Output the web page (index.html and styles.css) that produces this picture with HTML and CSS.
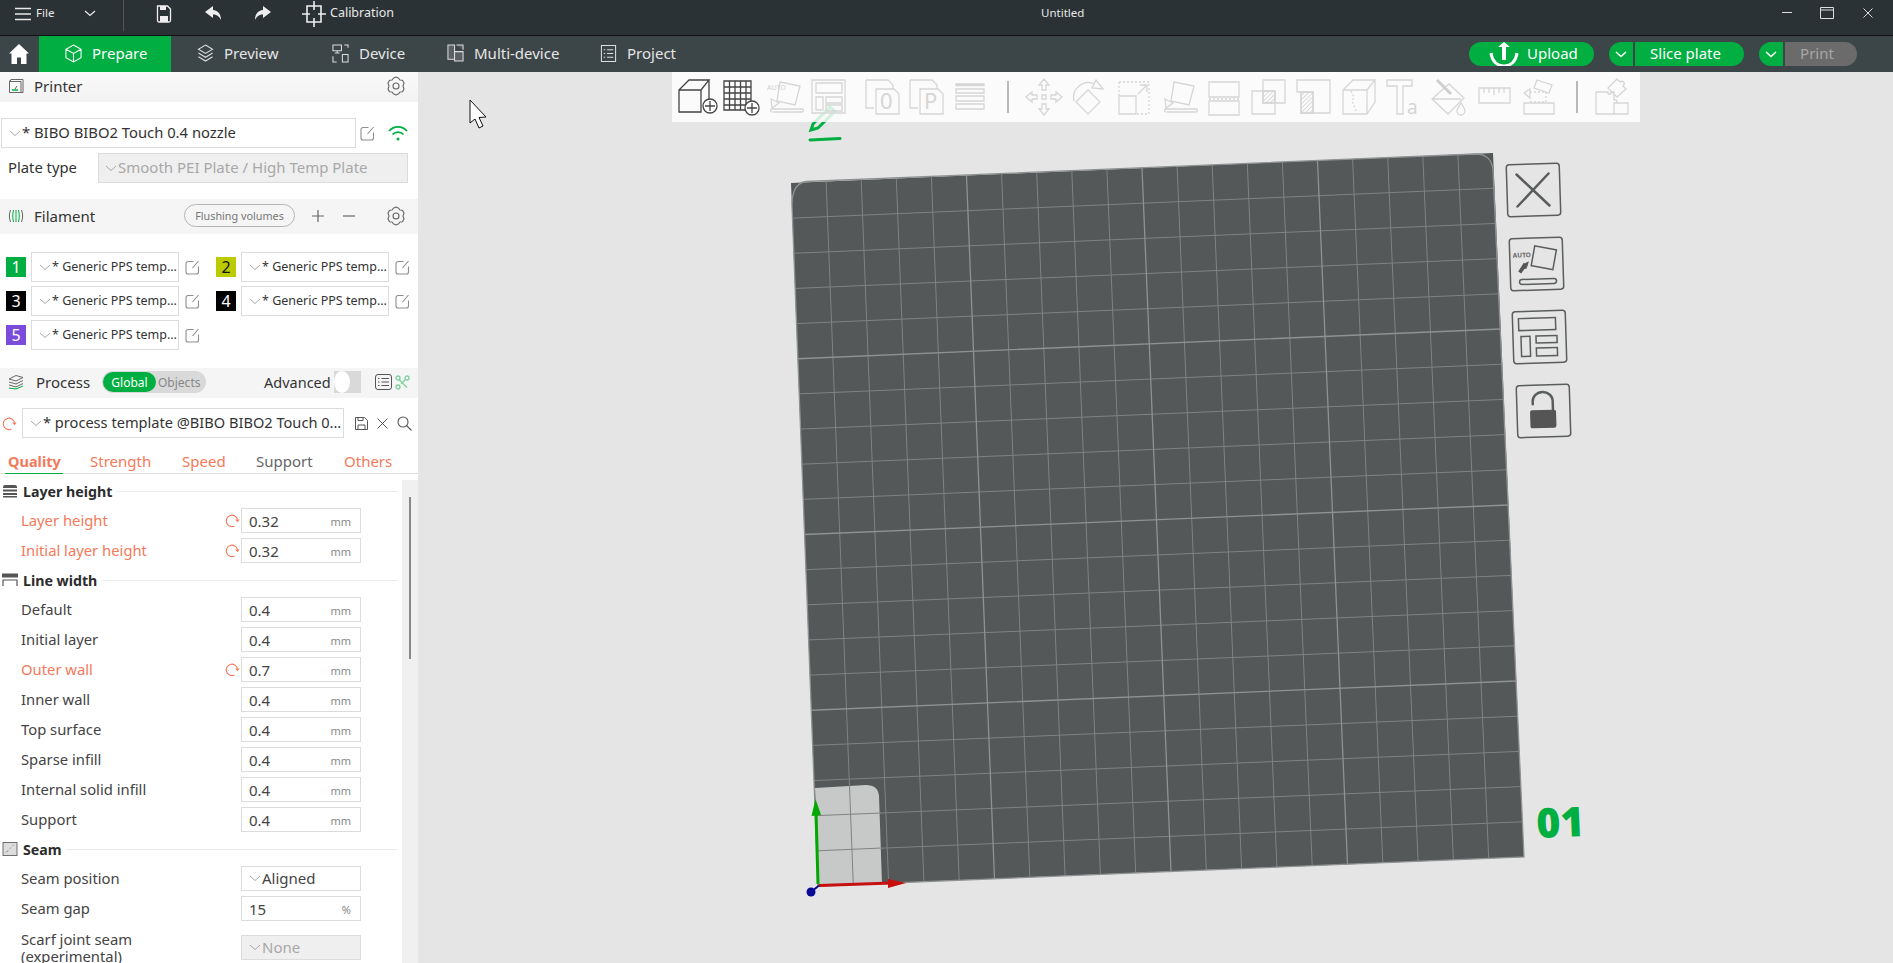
FILE: index.html
```html
<!DOCTYPE html>
<html lang="en">
<head>
<meta charset="utf-8">
<title>Untitled</title>
<link rel="stylesheet" href="styles.css">
</head>
<body>
<svg class="defs" aria-hidden="true">
  <symbol id="chev" viewBox="0 0 12 7"><path d="M1 1l5 4.5L11 1" fill="none" stroke="#a8a8a8" stroke-width="1"/></symbol>
  <symbol id="edit" viewBox="0 0 15 15"><path d="M8.5 1.5H3a2 2 0 0 0-2 2V12a2 2 0 0 0 2 2h8.500a2 2 0 0 0 2-2V6.500M7.500 8L13.500 1" fill="none" stroke="#8e8e8e" stroke-width="1.100"/></symbol>
  <symbol id="gear" viewBox="0 0 18 20"><path d="M6.300 2.200L9 1l2.700 1.200 1.200 1.800 2.600.2L17 7l-1 3 1 3-1.500 2.800-2.600.2-1.200 1.800L9 19l-2.700-1.200L5.100 16l-2.600-.2L1 13l1-3-1-3 1.500-2.800 2.600-.2z" fill="none" stroke="#666" stroke-width="1.100" stroke-linejoin="round"/><circle cx="9" cy="10" r="3" fill="none" stroke="#666" stroke-width="1.100"/></symbol>
  <symbol id="reload" viewBox="0 0 15 15"><path d="M9.500 13A5.700 5.700 0 1 1 12.500 6.500" fill="none" stroke="#f4795a" stroke-width="1.100"/><path d="M10.300 6.600h4.400l-2.200 2.600z" fill="#f4795a"/></symbol>
</svg>

<header class="titlebar">
  <div class="title-left">
    <svg class="ic-menu" viewBox="0 0 16 14"><path d="M0 1.500h16M0 7h16M0 12.500h16" stroke="#e8e8e8" stroke-width="1.400"/></svg>
    <span class="file-label">File</span>
    <svg class="ic-filechev" viewBox="0 0 12 7"><path d="M1 1l5 4.500L11 1" fill="none" stroke="#e8e8e8" stroke-width="1.300"/></svg>
    <span class="title-sep"></span>
    <svg class="ic-save" viewBox="0 0 16 18"><path d="M1.500 1h10l3 3v11.500a1.500 1.500 0 0 1-1.500 1.500H3a1.500 1.500 0 0 1-1.500-1.500z" fill="none" stroke="#eee" stroke-width="1.300"/><path d="M4 11h8v6H4zM4 1h6v4H4z" fill="#eee"/></svg>
    <svg class="ic-undo" viewBox="0 0 17 15"><path d="M8 0L0 6l8 6V8.500c3.500 0 6 1.500 8 5.500 0-6-3-9.500-8-10z" fill="#eee"/></svg>
    <svg class="ic-redo" viewBox="0 0 17 15"><path d="M9 0l8 6-8 6V8.500c-3.500 0-6 1.500-8 5.500 0-6 3-9.500 8-10z" fill="#eee"/></svg>
    <svg class="ic-calib" viewBox="0 0 24 26"><path d="M5 5h14v16H5z" fill="none" stroke="#eee" stroke-width="1.600"/><path d="M12 0v9M12 17v9M0 13h8M16 13h8" stroke="#eee" stroke-width="1.600"/></svg>
    <span class="calib-label">Calibration</span>
  </div>
  <span class="doc-title">Untitled</span>
  <div class="win-controls">
    <svg class="ic-min" viewBox="0 0 10 1"><path d="M0 .5h10" stroke="#ddd"/></svg>
    <svg class="ic-max" viewBox="0 0 14 12"><path d="M.5.500h13v11H.5zM.5 3h13" fill="none" stroke="#ddd"/></svg>
    <svg class="ic-close" viewBox="0 0 10 10"><path d="M.5.500l9 9M9.500.500l-9 9" stroke="#ddd"/></svg>
  </div>
</header>

<nav class="navbar">
  <svg class="ic-home" viewBox="0 0 20 20"><path d="M10 0l10 9.500h-2.500V20H12v-6.500H8V20H2.500V9.500H0z" fill="#fff"/></svg>
  <div class="tab tab-prepare tab-active">
    <svg class="tab-ic" viewBox="0 0 18 20"><path d="M9 1l8 4.500v9L9 19l-8-4.500v-9zM1 5.500l8 4.500 8-4.500M9 10v9" fill="none" stroke="#fff" stroke-width="1.100"/></svg>
    <span>Prepare</span>
  </div>
  <div class="tab tab-preview">
    <svg class="tab-ic" viewBox="0 0 18 20"><path d="M9 1l7.500 4.500L9 10 1.500 5.500zM1.500 9.500L9 14l7.500-4.500M1.500 13.500L9 18l7.500-4.500" fill="none" stroke="#ddd" stroke-width="1.100"/></svg>
    <span>Preview</span>
  </div>
  <div class="tab tab-device">
    <svg class="tab-ic" viewBox="0 0 18 20"><path d="M1 1h9v6H1zM5.500 7v2M3 9.500h5M13 1h4v3M1 13v6h4M11 11h6v8h-6z" fill="none" stroke="#ddd" stroke-width="1.100"/></svg>
    <span>Device</span>
  </div>
  <div class="tab tab-multi">
    <svg class="tab-ic" viewBox="0 0 18 20"><path d="M1 1h7v15H1zM10 1h7v5M8 8h9v10H8z" fill="#586063" stroke="#ddd" stroke-width="1.100"/></svg>
    <span>Multi-device</span>
  </div>
  <div class="tab tab-project">
    <svg class="tab-ic" viewBox="0 0 18 20"><path d="M1.500 1.500h15v17h-15zM4 6h1.500M4 10h1.500M4 14h1.500M7.500 6H14M7.500 10H14M7.500 14H14" fill="none" stroke="#ddd" stroke-width="1.100"/></svg>
    <span>Project</span>
  </div>
  <div class="actions">
    <button class="btn-upload">
      <svg class="ic-upload" viewBox="0 0 30 24"><path d="M2 11c1 8 6 13 13 13s12-5 13-13" fill="none" stroke="#fff" stroke-width="3"/><path d="M15 0l6 5h-4v13h-4V5H9z" fill="#fff"/></svg>
      <span class="btn-text">Upload</span>
    </button>
    <div class="split">
      <span class="split-chev"><svg class="ic-btnchev" viewBox="0 0 12 7"><path d="M1 1l5 4.500L11 1" fill="none" stroke="#fff" stroke-width="1.500"/></svg></span>
      <span class="split-main split-slice">Slice plate</span>
    </div>
    <div class="split">
      <span class="split-chev"><svg class="ic-btnchev" viewBox="0 0 12 7"><path d="M1 1l5 4.500L11 1" fill="none" stroke="#fff" stroke-width="1.500"/></svg></span>
      <span class="split-main split-print">Print</span>
    </div>
  </div>
</nav>

<main class="main">
  <aside class="sidebar">
    <div class="strip strip-printer">
      <svg class="strip-ic" viewBox="0 0 16 16"><path d="M3 1.500h12v13H1.500v-11zM1.500 3.500H13v11M3 1.500L1.500 3.500" fill="none" stroke="#666" stroke-width="1"/><path d="M4 12h6" stroke="#00ae42" stroke-width="1.500"/><path d="M7 11l2-3" stroke="#666"/></svg>
      <span class="strip-title">Printer</span>
      <svg class="gear"><use href="#gear"/></svg>
    </div>
    <div class="printer-row">
      <div class="combo combo-printer"><svg class="chev"><use href="#chev"/></svg><span>* BIBO BIBO2 Touch 0.4 nozzle</span></div>
      <svg class="edit edit-printer"><use href="#edit"/></svg>
      <svg class="ic-wifi" viewBox="0 0 20 16"><path d="M1 6c5-5.500 13-5.500 18 0M4.500 9.500c3-3.200 8-3.200 11 0" fill="none" stroke="#00ae42" stroke-width="1.800"/><circle cx="10" cy="14" r="1.500" fill="#00ae42"/></svg>
    </div>
    <div class="plate-row">
      <span class="plate-label">Plate type</span>
      <div class="combo combo-plate is-disabled"><svg class="chev"><use href="#chev"/></svg><span>Smooth PEI Plate / High Temp Plate</span></div>
    </div>

    <div class="strip strip-filament">
      <svg class="strip-ic" viewBox="0 0 16 16"><path d="M2.500 2c-1.500 4-1.500 8 0 12M13.500 2c1.500 4 1.500 8 0 12" fill="none" stroke="#666"/><path d="M5.500 2c-1 4-1 8 0 12M8 2v12M10.500 2c1 4 1 8 0 12" fill="none" stroke="#00ae42"/></svg>
      <span class="strip-title">Filament</span>
      <span class="pill">Flushing volumes</span>
      <svg class="ic-plus" viewBox="0 0 12 12"><path d="M6 0v12M0 6h12" stroke="#666" stroke-width="1.200"/></svg>
      <svg class="ic-minus" viewBox="0 0 12 12"><path d="M0 6h12" stroke="#666" stroke-width="1.200"/></svg>
      <svg class="gear gear-fil"><use href="#gear"/></svg>
    </div>
    <div class="filaments">
      <div class="fil"><span class="swatch sw-green">1</span><div class="combo combo-fil"><svg class="chev"><use href="#chev"/></svg><span>* Generic PPS temp...</span></div><svg class="edit"><use href="#edit"/></svg></div>
      <div class="fil"><span class="swatch sw-lime">2</span><div class="combo combo-fil"><svg class="chev"><use href="#chev"/></svg><span>* Generic PPS temp...</span></div><svg class="edit"><use href="#edit"/></svg></div>
      <div class="fil"><span class="swatch sw-black">3</span><div class="combo combo-fil"><svg class="chev"><use href="#chev"/></svg><span>* Generic PPS temp...</span></div><svg class="edit"><use href="#edit"/></svg></div>
      <div class="fil"><span class="swatch sw-black">4</span><div class="combo combo-fil"><svg class="chev"><use href="#chev"/></svg><span>* Generic PPS temp...</span></div><svg class="edit"><use href="#edit"/></svg></div>
      <div class="fil"><span class="swatch sw-purple">5</span><div class="combo combo-fil"><svg class="chev"><use href="#chev"/></svg><span>* Generic PPS temp...</span></div><svg class="edit"><use href="#edit"/></svg></div>
    </div>

    <div class="strip strip-process">
      <svg class="strip-ic" viewBox="0 0 16 16"><path d="M1 5l7-3.500 7 2-7 3.500zM15 6.500L8 10 1 8M15 9.500L8 13 1 11" fill="none" stroke="#666" stroke-width="1"/><path d="M1 14l7 1 7-3" fill="none" stroke="#00ae42"/></svg>
      <span class="strip-title">Process</span>
      <div class="seg"><span class="seg-on">Global</span><span class="seg-off">Objects</span></div>
      <span class="adv-label">Advanced</span>
      <span class="adv-toggle"><span class="adv-knob"></span></span>
      <svg class="ic-list" viewBox="0 0 17 16"><rect x=".5" y=".5" width="16" height="15" rx="2.500" fill="none" stroke="#555"/><path d="M3 4.500h1.500M3 8h1.500M3 11.500h1.500M6.500 4.500H14M6.500 8H14M6.500 11.500H14" stroke="#555"/></svg>
      <svg class="ic-scissor" viewBox="0 0 15 15"><circle cx="3" cy="3" r="2" fill="none" stroke="#7fcfa0" stroke-width="1.300"/><circle cx="12" cy="3" r="2" fill="none" stroke="#7fcfa0" stroke-width="1.300"/><circle cx="3" cy="12" r="2" fill="none" stroke="#7fcfa0" stroke-width="1.300"/><path d="M4 4.500l8 8M6 9l4-4" stroke="#7fcfa0" stroke-width="1.300"/></svg>
    </div>
    <div class="process-row">
      <svg class="reload reload-proc"><use href="#reload"/></svg>
      <div class="combo combo-process"><svg class="chev"><use href="#chev"/></svg><span>* process template @BIBO BIBO2 Touch 0...</span></div>
      <svg class="ic-disk" viewBox="0 0 13 13"><path d="M.5.500h9l3 3v9H.5zM3 .5v3h5v-3M3 12.500V8h7v4.500" fill="none" stroke="#555"/></svg>
      <svg class="ic-x" viewBox="0 0 11 11"><path d="M.5.500l10 10M10.500.500l-10 10" stroke="#555"/></svg>
      <svg class="ic-search" viewBox="0 0 15 15"><circle cx="6" cy="6" r="5" fill="none" stroke="#555" stroke-width="1.100"/><path d="M9.500 9.500l5 5" stroke="#555" stroke-width="1.100"/></svg>
    </div>
    <div class="tabs">
      <span class="ptab ptab-quality">Quality</span>
      <span class="ptab ptab-strength">Strength</span>
      <span class="ptab ptab-speed">Speed</span>
      <span class="ptab ptab-support">Support</span>
      <span class="ptab ptab-others">Others</span>
    </div>

    <div class="settings">
      <div class="settings-body">
        <div class="sec">
          <svg class="sec-ic" viewBox="0 0 16 14"><path d="M3 1h10a2 2 0 0 1 2 2v1H1V3a2 2 0 0 1 2-2zM1 5.500h14v2H1zM1 9h14v2H1zM1 12h14v1.500H1z" fill="#555"/></svg>
          <span class="sec-title">Layer height</span><span class="sec-line"></span>
        </div>
        <div class="field mod"><span class="f-label">Layer height</span><svg class="reload"><use href="#reload"/></svg><div class="input"><span>0.32</span><span class="unit">mm</span></div></div>
        <div class="field mod"><span class="f-label">Initial layer height</span><svg class="reload"><use href="#reload"/></svg><div class="input"><span>0.32</span><span class="unit">mm</span></div></div>
        <div class="sec">
          <svg class="sec-ic" viewBox="0 0 16 14"><path d="M.5 1h15v3H.5zM.5 7h15M1 7v6M15 7v6" fill="none" stroke="#555" stroke-width="1.200"/><path d="M0 1h16v3H0z" fill="#555"/></svg>
          <span class="sec-title">Line width</span><span class="sec-line"></span>
        </div>
        <div class="field"><span class="f-label">Default</span><div class="input"><span>0.4</span><span class="unit">mm</span></div></div>
        <div class="field"><span class="f-label">Initial layer</span><div class="input"><span>0.4</span><span class="unit">mm</span></div></div>
        <div class="field mod"><span class="f-label">Outer wall</span><svg class="reload"><use href="#reload"/></svg><div class="input"><span>0.7</span><span class="unit">mm</span></div></div>
        <div class="field"><span class="f-label">Inner wall</span><div class="input"><span>0.4</span><span class="unit">mm</span></div></div>
        <div class="field"><span class="f-label">Top surface</span><div class="input"><span>0.4</span><span class="unit">mm</span></div></div>
        <div class="field"><span class="f-label">Sparse infill</span><div class="input"><span>0.4</span><span class="unit">mm</span></div></div>
        <div class="field"><span class="f-label">Internal solid infill</span><div class="input"><span>0.4</span><span class="unit">mm</span></div></div>
        <div class="field"><span class="f-label">Support</span><div class="input"><span>0.4</span><span class="unit">mm</span></div></div>
        <div class="sec">
          <svg class="sec-ic" viewBox="0 0 16 15"><rect x=".5" y=".5" width="15" height="14" fill="#ddd" stroke="#666"/><path d="M4 11l2-2M8 7l1-1M11 4l1-1" stroke="#666"/></svg>
          <span class="sec-title">Seam</span><span class="sec-line"></span>
        </div>
        <div class="field"><span class="f-label">Seam position</span><div class="input input-select"><svg class="chev"><use href="#chev"/></svg><span>Aligned</span></div></div>
        <div class="field"><span class="f-label">Seam gap</span><div class="input"><span>15</span><span class="unit">%</span></div></div>
        <div class="field field-tall"><span class="f-label">Scarf joint seam<br>(experimental)</span><div class="input input-select is-disabled"><svg class="chev"><use href="#chev"/></svg><span>None</span></div></div>
      </div>
      <div class="scroll-track"><span class="scroll-thumb"></span></div>
    </div>
  </aside>

  <section class="canvas">
    <svg class="scene" viewBox="418 72 1475 891">
      <polygon points="791,183 1493,153 1524,857 818,886" fill="#545858"/>
      <g class="grid">
        <path d="M826.1 181.500L853.300 884.550M861.200 180L888.600 883.100M896.300 178.500L923.900 881.650M931.400 177L959.200 880.200M1001.600 174L1029.800 877.300M1036.700 172.500L1065.100 875.850M1071.800 171L1100.400 874.400M1106.900 169.500L1135.700 872.950M1177.100 166.500L1206.300 870.050M1212.200 165L1241.600 868.600M1247.300 163.500L1276.900 867.150M1282.400 162L1312.200 865.700M1352.600 159L1382.800 862.800M1387.700 157.500L1418.100 861.350M1422.800 156L1453.400 859.900M1457.900 154.500L1488.700 858.450"/>
        <path d="M792.350 218.150L1494.550 188.200M793.700 253.300L1496.100 223.400M795.050 288.450L1497.650 258.600M796.400 323.600L1499.200 293.800M799.100 393.900L1502.300 364.200M800.450 429.050L1503.850 399.400M801.800 464.200L1505.400 434.600M803.150 499.350L1506.950 469.800M805.850 569.650L1510.050 540.200M807.200 604.800L1511.600 575.400M808.550 639.950L1513.150 610.600M809.900 675.100L1514.700 645.800M812.600 745.400L1517.800 716.200M813.950 780.550L1519.350 751.400M815.300 815.700L1520.900 786.600M816.650 850.850L1522.450 821.800"/>
      </g>
      <path class="patch" d="M815 788L866 785Q878 785 879 796L882 884L819 886Z"/>
      <g class="grid">
        <path d="M849.500 786L853.300 884.550M815.300 815.700L881 813M816.650 850.850L882 848"/>
      </g>
      <g class="grid-major">
        <path d="M966.500 175.500L994.500 878.750M1142 168L1171 871.500M1317.500 160.500L1347.500 864.250"/>
        <path d="M797.750 358.750L1500.750 329M804.500 534.500L1508.500 505M811.250 710.250L1516.250 681"/>
      </g>
      <path class="bed-edge" d="M806 181.500C796 183 792 192 792 205L818 886L1524 857L1493 170C1492 160 1486 154 1476 154Z"/>
      <path class="axis-g" d="M818 884L816 812"/>
      <polygon class="fill-g" points="811.500,816 821,815 815.500,799"/>
      <path class="axis-r" d="M819 885.500L892 883"/>
      <polygon class="fill-r" points="888,879 888,888 906,883"/>
      <path class="axis-b" d="M819 885.500L811 892"/>
      <circle class="fill-b" cx="811" cy="892" r="4.500"/>

      <g class="pen">
        <path d="M811 130l2-6 17-17 5 4-17 17z"/>
        <path d="M810 140l30-1.500"/>
      </g>

      <g class="cursor">
        <path d="M470 100v23l5-4 4 9 4-2-4-8.500 7-.5z"/>
      </g>

      <text class="plate-num" transform="translate(1537 838) rotate(-2.500)">01</text>

      <g class="sidebtn" transform="translate(1533 190) rotate(-1.800)">
        <rect x="-26" y="-26" width="53" height="52" rx="3"/>
        <path class="thick" d="M-16-16L16 16M16-16L-16 16"/>
      </g>
      <g class="sidebtn" transform="translate(1536 264) rotate(-1.800)">
        <rect x="-26" y="-26" width="53" height="52" rx="3"/>
        <rect x="-3" y="-16" width="22" height="20" transform="rotate(12 8-6)"/>
        <text class="auto-txt" x="-23" y="-7">AUTO</text>
        <path class="solid" d="M-18 7l6-9 3 6-3 1-3 4zM-13 0l6-3-2 6z"/>
        <rect x="-17" y="15" width="37" height="5" rx="2.500"/>
      </g>
      <g class="sidebtn" transform="translate(1539 337) rotate(-1.800)">
        <rect x="-26" y="-26" width="53" height="52" rx="3"/>
        <rect x="-20" y="-19" width="37" height="12"/>
        <rect x="-18" y="-1" width="9" height="20"/>
        <rect x="-3" y="-1" width="21" height="7"/>
        <rect x="-3" y="11" width="21" height="8"/>
      </g>
      <g class="sidebtn" transform="translate(1543 411) rotate(-1.800)">
        <rect x="-26" y="-26" width="53" height="52" rx="3"/>
        <path d="M-10-7v-3a10 9 0 0 1 20 0v9" class="thick"/>
        <rect class="solid" x="-13" y="-1" width="26" height="18" rx="2"/>
      </g>
    </svg>

    <div class="toolbar">
      <svg class="tool tool-on" viewBox="0 0 36 36"><path d="M0 11h22v22H0zM0 11L10 1h20L22 11M30 1v19"/><circle cx="31" cy="27" r="7" fill="#fff"/><path d="M31 22v10M26 27h10"/></svg>
      <svg class="tool tool-on" viewBox="0 0 36 36"><path d="M1 2h27v29H1zM6.500 2v29M12 2v29M17.500 2v29M23 2v29M1 8h27M1 14h27M1 20h27M1 26h27"/><circle cx="29" cy="29" r="7" fill="#fff"/><path d="M29 24v10M24 29h10"/></svg>
      <svg class="tool" viewBox="0 0 36 36"><path d="M13 3l20 4-5 19-18-4zM6 33h29M5 33a1.500 1.500 0 0 1 0-3h30a1.500 1.500 0 0 1 0 3M4 20l1 9 7-5z"/><text class="tool-txt" x="0" y="11">AUTO</text></svg>
      <svg class="tool" viewBox="0 0 36 36"><path d="M1 1h33v33H1zM5 4h26v10H5zM5 18h7v13H5zM15 18h16v6H15zM15 26h16v6H15z"/></svg>
      <svg class="tool tool-gap" viewBox="0 0 36 36"><path d="M2 1h22l5 5v4M2 1v28h8M12 10h18l5 5v20H12z"/><text class="tool-big" x="16" y="30">0</text></svg>
      <svg class="tool" viewBox="0 0 36 36"><path d="M2 1h22l5 5v4M2 1v28h8M12 10h18l5 5v20H12z"/><text class="tool-big" x="16" y="30">P</text></svg>
      <svg class="tool" viewBox="0 0 36 36"><path d="M4 5h28v1.500H4zM4 10h28v4H4zM4 17h28v5H4zM4 25h28v5H4z"/></svg>
      <span class="tool-sep tool-sep-a"></span>
      <div class="tool-group">
        <svg class="tool" viewBox="0 0 36 36"><path d="M18 0l5 6h-3v5h-4V6h-3zM18 36l5-6h-3v-5h-4v5h-3zM0 18l6-5v3h5v4H6v3zM36 18l-6-5v3h-5v4h5v3zM16 16h4v4h-4z"/></svg>
        <svg class="tool" viewBox="0 0 36 36"><path d="M17 11l12 12-12 12L5 23zM3 22A15 15 0 0 1 24 5M25 1l7 9-11-1z"/></svg>
        <svg class="tool" viewBox="0 0 36 36"><path class="dash" d="M3 3h30v32h-12"/><path class="dash" d="M3 3v14"/><path d="M3 17h17v18H3zM22 15l8-8M24 6h7v7"/></svg>
        <svg class="tool" viewBox="0 0 36 36"><path d="M13 3l20 4-5 19-18-4zM6 33h29M5 33a1.500 1.500 0 0 1 0-3h30a1.500 1.500 0 0 1 0 3M4 20l1 9 7-5z"/></svg>
        <svg class="tool" viewBox="0 0 36 36"><path d="M3 3h30v15H3zM3 22h30v14H3z"/><path class="dash" d="M3 20h30"/></svg>
        <svg class="tool" viewBox="0 0 36 36"><defs><pattern id="hatch" width="3" height="3" patternUnits="userSpaceOnUse" patternTransform="rotate(45)"><path d="M0 0v3" stroke="#c9c9c9"/></pattern></defs><path d="M12 1h22v23H12zM1 12h23v23H1z"/><rect x="12" y="12" width="12" height="12" fill="url(#hatch)"/></svg>
        <svg class="tool" viewBox="0 0 36 36"><path d="M1 1h33v33H17V13H1zM5 13h12v21H5z"/><rect x="5" y="13" width="12" height="21" fill="url(#hatch)"/></svg>
        <svg class="tool" viewBox="0 0 36 36"><path d="M2 11h24v24H2zM2 11L12 1h22L26 11M34 1v22l-8 12"/><path class="dash" d="M10 12l3 6-2 4 5 12"/></svg>
        <svg class="tool" viewBox="0 0 36 36"><path d="M1 1h25v6h-9v28h-6V7H1z"/><text class="tool-a" x="21" y="35">a</text></svg>
        <svg class="tool" viewBox="0 0 36 36"><path d="M18 5L33 19 17 35 1 20zM1 20h29"/><path class="tool-thick" d="M6 1l14 14"/><path d="M30 24c-2 3-4 6-4 8a4 4 0 0 0 8 0c0-2-2-5-4-8z"/></svg>
        <svg class="tool" viewBox="0 0 36 36"><path d="M3 9h31v15H3zM8 9v5M13 9v5M18 9v7M23 9v5M28 9v5"/></svg>
        <svg class="tool" viewBox="0 0 36 36"><path d="M3 24h30v11H3zM16 1l15 5-3 8-15-5zM3 14l6-4v9z"/><path class="dash" d="M9 13h16v10H9"/></svg>
      </div>
      <span class="tool-sep tool-sep-b"></span>
      <svg class="tool tool-last" viewBox="0 0 36 36"><path d="M1 13h12c-1 3 3 3 3 0h3v8c4-1 4 3 0 3v11H1zM19 24h14v11H19zM13 9l9-9 3 3c3-2 6 1 3 4l3 3-9 8z"/></svg>
    </div>
  </section>
</main>
</body>
</html>
```

FILE: styles.css
```css
* { box-sizing: border-box; }
html, body { margin: 0; padding: 0; }
body {
  width: 1893px;
  height: 963px;
  overflow: hidden;
  display: flex;
  flex-direction: column;
  font-family: "Noto Sans", "Liberation Sans", sans-serif;
  font-size: 14px;
  color: #333;
  background: #e5e5e5;
}
svg { display: block; flex: none; }
.defs { position: absolute; width: 0; height: 0; }

/* Title bar */
.titlebar {
  flex: none;
  height: 36px;
  display: flex;
  background: #2b3235;
  border-bottom: 1px solid #111;
  color: #e8e8e8;
}
.title-left { width: 1041px; flex: none; display: flex; align-items: center; padding-left: 15px; height: 27px; }
.ic-menu { width: 16px; height: 14px; }
.file-label { margin-left: 5px; font-size: 11.500px; width: 18px; padding-bottom: 2px; }
.ic-filechev { width: 12px; height: 7px; margin-left: 30px; }
.title-sep { width: 1px; height: 31px; background: #555; margin-left: 27px; align-self: flex-start; }
.ic-save { width: 16px; height: 18px; margin-left: 32px; }
.ic-undo { width: 17px; height: 15px; margin-left: 33px; }
.ic-redo { width: 17px; height: 15px; margin-left: 32px; }
.ic-calib { width: 24px; height: 26px; margin-left: 31px; }
.calib-label { font-size: 12.500px; margin-left: 4px; padding-bottom: 2px; }
.doc-title { font-size: 11.500px; height: 27px; line-height: 26px; }
.win-controls { margin-left: auto; display: flex; align-items: center; height: 25px; padding-right: 20px; }
.ic-min { width: 10px; height: 1px; }
.ic-max { width: 14px; height: 12px; margin-left: 28px; }
.ic-close { width: 10px; height: 10px; margin-left: 29px; }

/* Nav bar */
.navbar {
  flex: none;
  height: 36px;
  display: flex;
  align-items: center;
  background: #3c4548;
  color: #e6e6e6;
  padding-left: 9px;
  padding-right: 36px;
}
.ic-home { width: 20px; height: 20px; margin-right: 10px; }
.tab { height: 36px; display: flex; align-items: center; padding-left: 26px; padding-bottom: 2px; gap: 10px; font-size: 15px; flex: none; }
.tab-ic { width: 17px; height: 19px; }
.tab-active { background: #00ae42; color: #fff; }
.tab-prepare { width: 132px; }
.tab-preview { width: 135px; }
.tab-device { width: 115px; }
.tab-multi { width: 153px; }
.tab-project { width: 110px; }
.actions { margin-left: auto; display: flex; gap: 15px; align-items: center; }
.btn-upload {
  width: 125px;
  height: 24px;
  border: 0;
  padding: 0 0 0 20px;
  border-radius: 12px;
  background: #00ae42;
  color: #fff;
  display: flex;
  align-items: center;
  gap: 8px;
  font: inherit;
  font-size: 15px;
  overflow: hidden;
}
.btn-text { padding-bottom: 2px; }
.ic-upload { width: 30px; height: 24px; }
.split { display: flex; gap: 2px; height: 24px; }
.split-chev { width: 24px; background: #00ae42; border-radius: 12px 0 0 12px; display: flex; align-items: center; justify-content: center; }
.ic-btnchev { width: 12px; height: 7px; }
.split-main { display: flex; align-items: center; justify-content: center; border-radius: 0 12px 12px 0; font-size: 15px; padding: 0 8px 2px 0; }
.split-slice { width: 109px; background: #00ae42; color: #fff; }
.split-print { width: 72px; background: #6b6b6b; color: #a6a6a6; }

/* Main */
.main { flex: 1; display: flex; min-height: 0; }
.sidebar { width: 418px; flex: none; background: #fff; display: flex; flex-direction: column; overflow: hidden; }
.strip { display: flex; align-items: center; background: #f5f5f5; padding-left: 8px; padding-bottom: 2px; flex: none; }
.strip-printer { height: 30px; background: linear-gradient(#fafafa, #f2f2f2); }
.strip-filament { height: 35px; margin-top: 16px; }
.strip-process { height: 30px; margin-top: 18px; }
.strip-ic { width: 16px; height: 16px; }
.strip-title { font-size: 15px; margin-left: 10px; color: #333; }
.strip-printer .strip-title { width: 353px; }
.strip-filament .strip-title { width: 60px; }
.strip-process .strip-title { width: 66px; margin-left: 12px; }
.gear { width: 18px; height: 20px; }
.pill {
  margin-left: 90px;
  width: 111px;
  height: 23px;
  border: 1px solid #b5b5b5;
  border-radius: 12px;
  display: flex;
  align-items: center;
  justify-content: center;
  font-size: 10.800px;
  color: #777;
}
.ic-plus { width: 12px; height: 12px; margin-left: 17px; }
.ic-minus { width: 12px; height: 12px; margin-left: 19px; }
.gear-fil { margin-left: 32px; }

.combo {
  height: 30px;
  background: #fff;
  border: 1px solid #dcdcdc;
  display: flex;
  align-items: center;
  white-space: nowrap;
  overflow: hidden;
  flex: none;
}
.combo span { padding-bottom: 2px; }
.chev { width: 12px; height: 7px; flex: none; }
.is-disabled { background: #efefef; color: #a8a8a8; }
.printer-row { display: flex; align-items: center; height: 30px; margin-top: 16px; padding-left: 1px; flex: none; }
.combo-printer { width: 355px; padding-left: 7px; gap: 1px; font-size: 14.800px; }
.edit { width: 15px; height: 15px; flex: none; }
.edit-printer { margin-left: 4px; }
.ic-wifi { width: 20px; height: 16px; margin-left: 13px; }
.plate-row { display: flex; align-items: center; height: 30px; margin-top: 5px; padding-left: 8px; flex: none; }
.plate-label { width: 90px; font-size: 14.800px; padding-bottom: 2px; }
.combo-plate { width: 310px; padding-left: 6px; gap: 1px; font-size: 15px; }

.filaments {
  display: grid;
  grid-template-columns: 210px 200px;
  grid-auto-rows: 30px;
  row-gap: 4px;
  margin-top: 18px;
  padding-left: 6px;
  flex: none;
}
.fil { display: flex; align-items: center; }
.swatch { width: 20px; height: 20px; display: flex; align-items: center; justify-content: center; font-size: 16px; flex: none; }
.sw-green { background: #00ae42; color: #fff; }
.sw-lime { background: #bcca00; color: #111; }
.sw-black { background: #000; color: #fff; }
.sw-purple { background: #7b4cdb; color: #fff; }
.combo-fil { width: 148px; margin-left: 5px; padding-left: 7px; gap: 1px; font-size: 12.500px; }
.fil .edit { margin-left: 6px; }

.seg { width: 104px; height: 22px; background: #d9d9d9; border-radius: 11px; display: flex; align-items: center; padding-left: 1px; }
.seg-on { width: 53px; height: 20px; border-radius: 10px; background: #00ae42; color: #fff; font-size: 12px; display: flex; align-items: center; justify-content: center; }
.seg-off { font-size: 12px; color: #888; margin-left: 2px; }
.adv-label { margin-left: 58px; font-size: 14.500px; width: 70px; white-space: nowrap; }
.adv-toggle { width: 27px; height: 22px; background: #d9d9d9; display: flex; align-items: center; }
.adv-knob { width: 16px; height: 22px; border-radius: 50%; background: #fff; }
.ic-list { width: 17px; height: 16px; margin-left: 14px; }
.ic-scissor { width: 15px; height: 15px; margin-left: 3px; }

.process-row { display: flex; align-items: center; height: 30px; margin-top: 10px; padding-left: 2px; flex: none; }
.reload { width: 15px; height: 15px; flex: none; }
.combo-process { width: 322px; margin-left: 5px; padding-left: 7px; gap: 1px; font-size: 14.600px; }
.ic-disk { width: 13px; height: 13px; margin-left: 11px; }
.ic-x { width: 11px; height: 11px; margin-left: 9px; }
.ic-search { width: 15px; height: 15px; margin-left: 9px; }

.tabs { height: 36px; padding-top: 10px; border-bottom: 1px solid #ddd; display: flex; align-items: center; flex: none; position: relative; font-size: 15px; color: #f4795a; }
.ptab { flex: none; }
.ptab-quality { margin-left: 8px; width: 82px; font-weight: 700; font-size: 14.500px; }
.ptab-quality::after { content: ""; position: absolute; left: 5px; bottom: -1px; width: 58px; height: 1px; background: #00ae42; }
.ptab-strength { width: 92px; }
.ptab-speed { width: 74px; }
.ptab-support { width: 88px; color: #666; }

.settings { flex: 1; display: flex; min-height: 0; }
.settings-body { width: 402px; flex: none; display: flex; flex-direction: column; gap: 5px; padding-top: 5px; padding-left: 2px; }
.scroll-track { width: 16px; flex: none; margin-top: 6px; background: #f0f0f0; padding: 17px 0 0 7px; }
.scroll-thumb { display: block; width: 2px; height: 162px; background: #888; }
.sec { height: 24px; display: flex; align-items: center; flex: none; padding-right: 4px; }
.sec-ic { width: 16px; height: 14px; }
.sec-title { font-weight: 700; font-size: 14.200px; margin-left: 5px; color: #2c2c2c; white-space: nowrap; }
.sec-line { flex: 1; height: 1px; background: #ececec; margin-left: 5px; }
.field { height: 25px; display: flex; align-items: center; flex: none; padding-left: 19px; position: relative; }
.field-tall { height: 43px; }
.f-label { position: absolute; left: 19px; font-size: 14.800px; line-height: 17px; color: #444; white-space: nowrap; }
.mod .f-label { color: #f4795a; }
.field .reload { margin-left: 204px; }
.input {
  width: 120px;
  height: 25px;
  border: 1px solid #dcdcdc;
  background: #fff;
  display: flex;
  align-items: center;
  padding: 0 9px 0 7px;
  font-size: 15px;
  margin-left: auto;
  margin-right: 41px;
  color: #444;
}
.input .unit { margin-left: auto; font-size: 11px; color: #888; padding-top: 2px; }
.input-select { padding-left: 7px; gap: 1px; }
.input-select span { padding-bottom: 2px; }
.input-select.is-disabled { background: #efefef; color: #a8a8a8; }

/* Canvas */
.canvas { flex: 1; position: relative; background: #e5e5e5; overflow: hidden; }
.scene { position: absolute; left: 0; top: 0; width: 1475px; height: 891px; }
.grid path { fill: none; stroke: #808383; stroke-width: 1; }
.grid-major path { fill: none; stroke: #8f9292; stroke-width: 1.300; }
.patch { fill: #c7c9c9; }
.bed-edge { fill: none; stroke: #8f9292; stroke-width: 1.300; }
.axis-g { stroke: #00a800; stroke-width: 3; }
.axis-r { stroke: #c80f0f; stroke-width: 3; }
.axis-b { stroke: #0a0a96; stroke-width: 2; }
.fill-g { fill: #00a800; }
.fill-r { fill: #c80f0f; }
.fill-b { fill: #0a0a96; }
.pen path { fill: none; stroke: #00ae42; stroke-width: 3; stroke-linecap: round; }
.cursor path { fill: #fff; stroke: #111; stroke-width: 1; stroke-linejoin: round; }
.plate-num { font-family: "Open Sans", "Noto Sans", sans-serif; font-weight: 800; font-size: 41px; fill: #00ae42; }
.sidebtn rect, .sidebtn path { fill: none; stroke: #5a5d5d; stroke-width: 1.500; }
.sidebtn .thick { stroke-width: 2.500; stroke-linecap: round; }
.sidebtn .solid { fill: #555; stroke: none; }
.auto-txt { font-size: 6.500px; font-weight: 700; fill: #666; }

.toolbar {
  position: absolute;
  left: 254px;
  top: 0;
  width: 968px;
  height: 50px;
  background: rgba(255, 255, 255, 0.82);
  display: flex;
  align-items: center;
  padding-left: 7px;
  gap: 8px;
}
.tool { width: 36px; height: 36px; fill: none; stroke: #d6d6d6; stroke-width: 1.300; overflow: visible; }
.tool-on { stroke: #444; }
.tool-gap { margin-left: 9px; }
.tool-group { display: flex; gap: 9px; margin-left: 9px; }
.tool-sep { width: 2px; height: 32px; background: #b9b9b9; flex: none; }
.tool-sep-a { margin-left: 11px; }
.tool-sep-b { margin-left: 11px; }
.tool-last { margin-left: 9px; }
.tool .dash { stroke-dasharray: 2 2; }
.tool-thick { stroke-width: 3; stroke: #cfcfcf; }
.tool-txt { font-size: 7px; fill: #d0d0d0; stroke: none; }
.tool-big { font-size: 22px; fill: #d6d6d6; stroke: none; }
.tool-a { font-size: 19px; fill: #d6d6d6; stroke: none; }
```
